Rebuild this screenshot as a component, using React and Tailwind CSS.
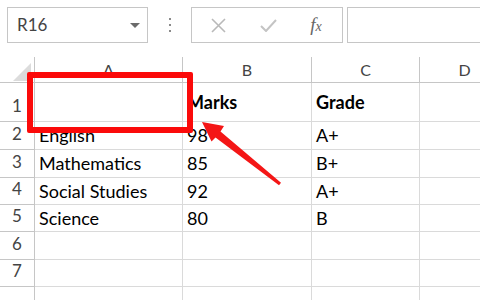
import React from 'react';

const cols = [
  { key: 'A', w: 'w-[148px]' },
  { key: 'B', w: 'w-[129px]' },
  { key: 'C', w: 'w-[108px]' },
  { key: 'D', w: 'w-[90px]' },
];

const rows = [
  { n: 1, h: 'h-[39px]', cells: ['', 'Marks', 'Grade', ''], bold: true },
  { n: 2, h: 'h-[28px]', cells: ['English', '98', 'A+', ''] },
  { n: 3, h: 'h-[28px]', cells: ['Mathematics', '85', 'B+', ''] },
  { n: 4, h: 'h-[27px]', cells: ['Social Studies', '92', 'A+', ''] },
  { n: 5, h: 'h-[27px]', cells: ['Science', '80', 'B', ''] },
  { n: 6, h: 'h-[28px]', cells: ['', '', '', ''] },
  { n: 7, h: 'h-[27px]', cells: ['', '', '', ''] },
  { n: '', h: 'h-[27px]', cells: ['', '', '', ''] },
];

const Toolbar = () => (
  <div className="flex h-[57px] items-start pt-[7px] pl-[7px]">
    {/* Name box */}
    <div className="relative flex h-[36px] w-[141px] items-center border border-[#c6c6c6] pl-[9px] text-[17px] text-[#444]">
      R16
      <div className="absolute left-[122px] top-[15px] h-0 w-0 border-x-[5px] border-t-[5px] border-x-transparent border-t-[#6b6b6b]" />
    </div>

    {/* Dots */}
    <div className="flex h-[36px] w-[43px] flex-col items-center justify-center gap-[4px]">
      <span className="h-[2px] w-[2px] bg-[#8a8a8a]" />
      <span className="h-[2px] w-[2px] bg-[#8a8a8a]" />
      <span className="h-[2px] w-[2px] bg-[#8a8a8a]" />
    </div>

    {/* Cancel / enter / fx */}
    <div className="flex h-[36px] w-[152px] items-center border border-[#c6c6c6]">
      <div className="flex w-[52px] justify-center">
        <svg width="15" height="15" viewBox="0 0 15 15">
          <path d="M1 1 L14 14 M14 1 L1 14" stroke="#b9b9b9" strokeWidth="1.6" fill="none" />
        </svg>
      </div>
      <div className="flex w-[48px] justify-center">
        <svg width="17" height="13" viewBox="0 0 17 13">
          <path d="M1 7 L6 12 L16 1" stroke="#c4c4c4" strokeWidth="2" fill="none" />
        </svg>
      </div>
      <div className="w-[48px] text-center font-['Liberation_Serif',serif] text-[19px] italic text-[#666]">
        <span>f</span><span className="text-[14px]">x</span>
      </div>
    </div>

    {/* Formula input */}
    <div className="ml-[4px] h-[36px] flex-1 border border-r-0 border-[#c6c6c6]" />
  </div>
);

const Sheet = () => (
  <div className="flex flex-col">
    {/* Column headers */}
    <div className="flex h-[26px]">
      <div className="relative w-[35px] shrink-0 border-r border-b border-[#c6c6c6]">
        <div className="absolute left-[13px] top-[6px] h-0 w-0 border-b-[18px] border-l-[18px] border-b-[#dcdcdc] border-l-transparent" />
      </div>
      {cols.map(c => (
        <div
          key={c.key}
          className={`${c.w} flex shrink-0 items-center justify-center border-r border-b border-[#c6c6c6] text-[16px] text-[#444]`}
        >
          {c.key}
        </div>
      ))}
    </div>

    {rows.map((r, idx) => (
      <div key={idx} className={`${r.h} flex`}>
        <div className="flex w-[35px] shrink-0 items-end justify-center border-r border-b border-[#c6c6c6] pb-[3px] text-[17px] text-[#444]">
          {r.n}
        </div>
        {cols.map((c, i) => (
          <div
            key={c.key}
            className={`${c.w} flex shrink-0 items-center border-r border-b border-[#dadada] pl-[4px] text-[18px] text-black ${r.bold ? 'font-bold' : ''}`}
          >
            {r.cells[i]}
          </div>
        ))}
      </div>
    ))}
  </div>
);

const Annotation = () => (
  <>
    <div className="pointer-events-none absolute left-[27px] top-[72px] h-[61px] w-[166px] rounded-[2px] border-[6px] border-[#fb0a0a]" />
    <svg className="pointer-events-none absolute left-0 top-0" width="480" height="300">
      <polygon
        points="202,122 224,126 220.5,131.5 281,182.8 279,185.2 215.5,137.5 211.5,141.5"
        fill="#f41616"
      />
    </svg>
  </>
);

export default function App() {
  return (
    <div className="relative h-[300px] w-[480px] overflow-hidden bg-white font-['Lato','Liberation_Sans',sans-serif]">
      <Toolbar />
      <Sheet />
      <Annotation />
    </div>
  );
}
